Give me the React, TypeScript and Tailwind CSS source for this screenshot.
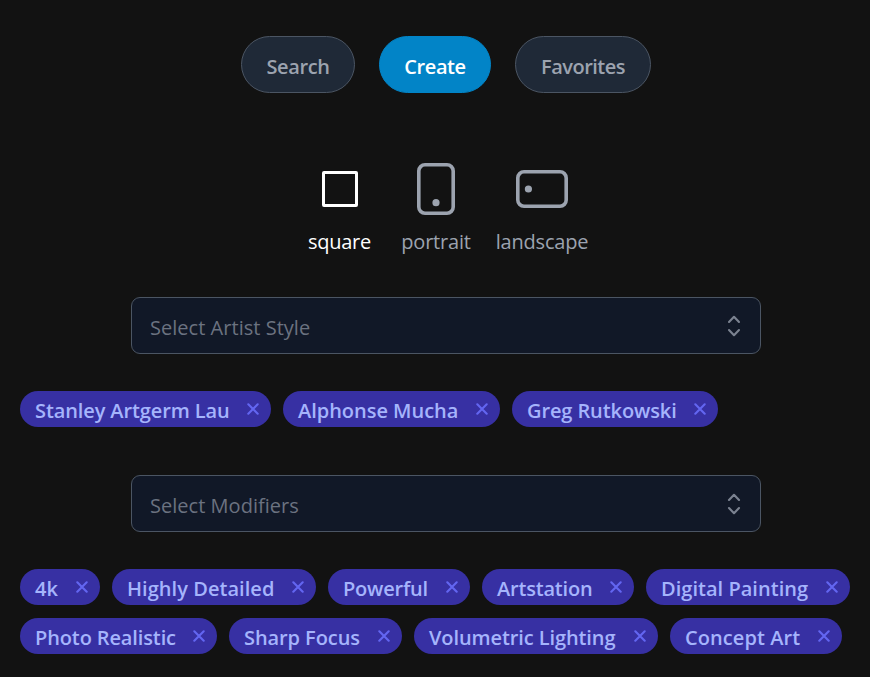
import React from "react";

const text = "whitespace-nowrap";

function Tab({ label, active, w, track }: { label: string; active?: boolean; w: string; track: string }) {
  return (
    <button
      className={`flex h-[57px] items-center justify-center rounded-full border pt-[5px] text-[20px] font-semibold leading-none ${w} ${
        active ? "border-[#0284c7] bg-[#0284c7] text-white" : "border-[#4b5563] bg-[#1f2937] text-[#9ca3af]"
      }`}
    >
      <span className={`${text} ${track}`}>{label}</span>
    </button>
  );
}

function Select({ placeholder, track }: { placeholder: string; track: string }) {
  return (
    <div className="ml-[131px] flex h-[57px] w-[630px] items-center justify-between rounded-[9px] border border-[#4b5563] bg-[#111827] pl-[18px] pr-[19px]">
      <span className={`${text} pt-[4px] text-[20px] leading-none text-[#6b7280] ${track}`}>{placeholder}</span>
      <svg width="14" height="22" viewBox="0 0 14 22" fill="none" stroke="#7b8290" strokeWidth="2.1" strokeLinecap="round" strokeLinejoin="round">
        <path d="M2 7l5-5.2L12 7M2 15l5 5.2 5-5.2" />
      </svg>
    </div>
  );
}

function Tag({ label, w, track }: { label: string; w: string; track: string }) {
  return (
    <div className={`flex h-9 shrink-0 items-center justify-between rounded-full bg-[#3730a3] pl-[15px] pr-[12px] ${w}`}>
      <span className={`${text} pt-[4px] text-[20px] font-semibold leading-none text-[#a5b4fc] ${track}`}>{label}</span>
      <svg className="shrink-0" width="12" height="12" viewBox="0 0 12 12" fill="none" stroke="#6366f1" strokeWidth="2.1" strokeLinecap="round">
        <path d="M1.3 1.3l9.4 9.4M10.7 1.3l-9.4 9.4" />
      </svg>
    </div>
  );
}

export default function App() {
  return (
    <div className="h-[677px] w-[870px] overflow-hidden bg-[#121212] font-['Open_Sans','Noto_Sans',sans-serif]">
      <nav className="flex gap-6 pl-[241px] pt-[36px]">
        <Tab label="Search" w="w-[114px]" track="tracking-[-0.4px]" />
        <Tab label="Create" w="w-[112px]" track="tracking-[-0.4px]" active />
        <Tab label="Favorites" w="w-[136px]" track="tracking-[-0.5px]" />
      </nav>

      <div className="mt-[63px] flex h-[141px] pl-[304px] text-[20px] leading-none text-[#9ca3af]">
        <div className="flex w-[71px] flex-col items-center text-white">
          <svg width="60" height="66" viewBox="0 0 60 66" fill="none" stroke="currentColor" strokeWidth="3">
            <rect x="13.5" y="16.5" width="33" height="33" rx="0.5" />
          </svg>
          <span className={`mt-[10px] ${text} tracking-[-0.3px]`}>square</span>
        </div>
        <div className="ml-[21px] flex w-[80px] flex-col items-center">
          <svg width="60" height="66" viewBox="0 0 60 66" fill="none" stroke="currentColor" strokeWidth="3.6">
            <rect x="12.8" y="8.8" width="34.4" height="48.4" rx="6.2" />
            <circle cx="30" cy="46.7" r="3.6" fill="currentColor" stroke="none" />
          </svg>
          <span className={`mt-[10px] ${text} tracking-[-0.2px]`}>portrait</span>
        </div>
        <div className="ml-[16px] flex w-[100px] flex-col items-center">
          <svg width="60" height="66" viewBox="0 0 60 66" fill="none" stroke="currentColor" strokeWidth="3.6">
            <rect x="5.8" y="15.8" width="48.4" height="34.4" rx="6.2" />
            <circle cx="16.4" cy="33" r="3.6" fill="currentColor" stroke="none" />
          </svg>
          <span className={`mt-[10px] ${text} tracking-[-0.2px]`}>landscape</span>
        </div>
      </div>

      <Select placeholder="Select Artist Style" track="tracking-[0.03px]" />
      <div className="mt-[37px] flex gap-3 pl-5">
        <Tag label="Stanley Artgerm Lau" w="w-[251px]" track="tracking-[-0.11px]" />
        <Tag label="Alphonse Mucha" w="w-[217px]" track="tracking-[-0.03px]" />
        <Tag label="Greg Rutkowski" w="w-[206px]" track="tracking-[-0.1px]" />
      </div>

      <div className="mt-12">
        <Select placeholder="Select Modifiers" track="tracking-[0.03px]" />
      </div>
      <div className="mt-[37px] flex gap-3 pl-5">
        <Tag label="4k" w="w-[80px]" track="tracking-[0px]" />
        <Tag label="Highly Detailed" w="w-[204px]" track="tracking-[0.05px]" />
        <Tag label="Powerful" w="w-[142px]" track="tracking-[-0.2px]" />
        <Tag label="Artstation" w="w-[152px]" track="tracking-[-0.2px]" />
        <Tag label="Digital Painting" w="w-[204px]" track="tracking-[0.03px]" />
      </div>
      <div className="mt-[13px] flex gap-3 pl-5">
        <Tag label="Photo Realistic" w="w-[197px]" track="tracking-[-0.12px]" />
        <Tag label="Sharp Focus" w="w-[173px]" track="tracking-[-0.08px]" />
        <Tag label="Volumetric Lighting" w="w-[244px]" track="tracking-[-0.1px]" />
        <Tag label="Concept Art" w="w-[172px]" track="tracking-[0.08px]" />
      </div>
    </div>
  );
}
